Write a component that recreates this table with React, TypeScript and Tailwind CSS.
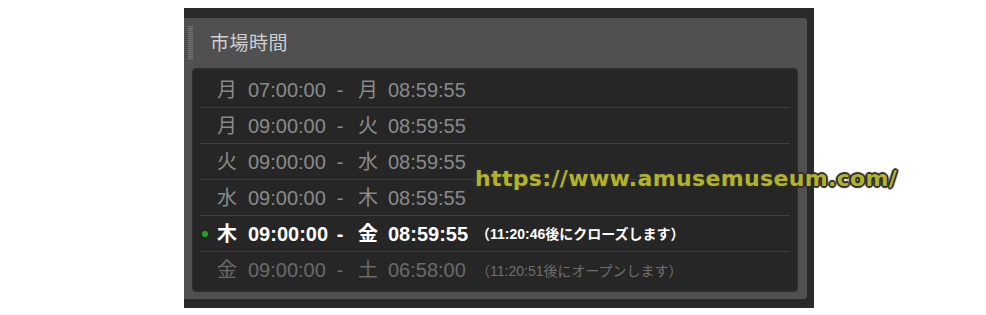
import React from "react";

type Row = {
  d1: string;
  t1: string;
  d2: string;
  t2: string;
  note?: string;
  kind: "normal" | "active" | "dim";
};

const rows: Row[] = [
  { d1: "月", t1: "07:00:00", d2: "月", t2: "08:59:55", kind: "normal" },
  { d1: "月", t1: "09:00:00", d2: "火", t2: "08:59:55", kind: "normal" },
  { d1: "火", t1: "09:00:00", d2: "水", t2: "08:59:55", kind: "normal" },
  { d1: "水", t1: "09:00:00", d2: "木", t2: "08:59:55", kind: "normal" },
  {
    d1: "木",
    t1: "09:00:00",
    d2: "金",
    t2: "08:59:55",
    note: "（11:20:46後にクローズします）",
    kind: "active",
  },
  {
    d1: "金",
    t1: "09:00:00",
    d2: "土",
    t2: "06:58:00",
    note: "（11:20:51後にオープンします）",
    kind: "dim",
  },
];

const font = {
  fontFamily:
    '"Liberation Sans", Arial, "Noto Sans CJK JP", "Noto Sans CJK SC", sans-serif',
};

export default function App() {
  return (
    <div className="relative w-[986px] h-[315px] bg-white overflow-hidden" style={font}>
      <div className="ml-[184px] mt-[8px] w-[630px] h-[300px] bg-[#2a2a2a] pt-[10px] pr-[7px] pb-[9px]">
        <div className="h-full bg-[#505050] rounded-r-[3px] flex flex-col">
          <div className="h-[50px] flex items-center shrink-0">
            <div className="ml-[4px] w-[5px] h-[34px] bg-[repeating-linear-gradient(to_bottom,#707070_0px,#707070_1px,#5a5a5a_1px,#5a5a5a_2px)]" />
            <div className="ml-[17px] text-[19px] leading-none text-[#cfcfcf] tracking-[0.5px]">
              市場時間
            </div>
          </div>
          <div className="ml-[8px] mr-[9px] h-[224px] bg-[#262626] rounded-[4px] border border-[#2f2f2f] pt-[3px]">
            {rows.map((r, i) => {
              const color =
                r.kind === "active"
                  ? "text-white font-bold"
                  : r.kind === "dim"
                  ? "text-[#6a6a6a]"
                  : "text-[#8a8a8a]";
              const noteColor =
                r.kind === "active" ? "text-white font-bold" : "text-[#6e6e6e]";
              return (
                <div
                  key={i}
                  className={
                    "relative mx-[7px] h-[36px] flex items-center " +
                    (i < rows.length - 1 ? "border-b border-[#3e3e3e]" : "")
                  }
                >
                  {r.kind === "active" && (
                    <div className="absolute left-[2px] top-[15px] w-[6px] h-[6px] rounded-full bg-[#1fa51f]" />
                  )}
                  <div className={"flex items-center text-[20px] leading-none " + color}>
                    <span className="ml-[17px] w-[31px]">{r.d1}</span>
                    <span className="w-[80px]">{r.t1}</span>
                    <span className="w-[24px] text-center">-</span>
                    <span className="ml-[6px] w-[30px]">{r.d2}</span>
                    <span className="w-[80px]">{r.t2}</span>
                  </div>
                  {r.note && (
                    <span className={"ml-[8px] text-[14px] leading-none mt-[1px] " + noteColor}>
                      {r.note}
                    </span>
                  )}
                </div>
              );
            })}
          </div>
        </div>
      </div>
      <div
        className="absolute left-[475px] top-[168px] text-[22px] tracking-[0.35px] leading-none font-bold text-[#b3b32a] whitespace-nowrap [text-shadow:1px_1px_0_#2b2b2b,-1px_-1px_0_#2b2b2b,1px_-1px_0_#2b2b2b,-1px_1px_0_#2b2b2b,0_2px_1px_#2b2b2b,2px_0_1px_#2b2b2b,0_-2px_1px_#2b2b2b,-2px_0_1px_#2b2b2b]"
        style={{ fontFamily: '"DejaVu Sans", Verdana, sans-serif' }}
      >
        https://www.amusemuseum.com/
      </div>
    </div>
  );
}
